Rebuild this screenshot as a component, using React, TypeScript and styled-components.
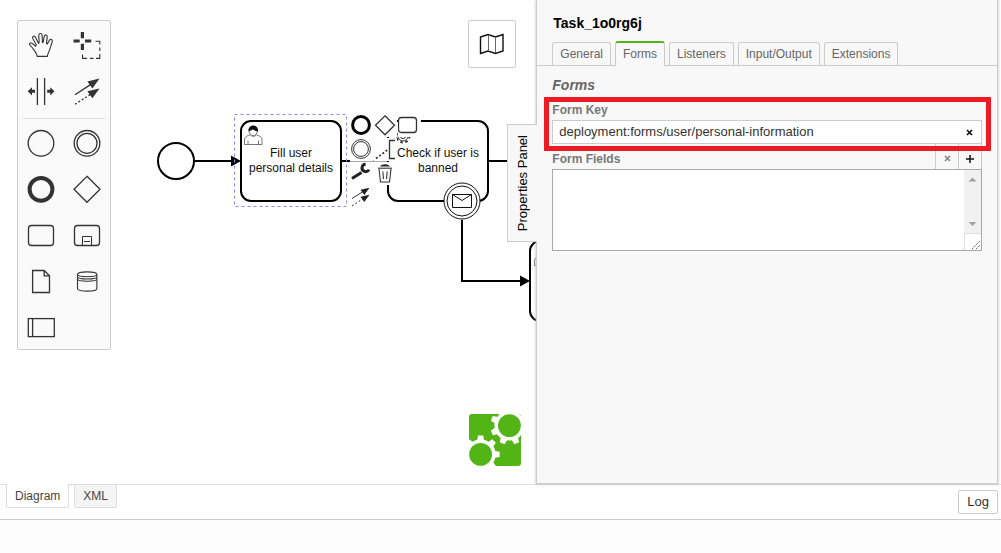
import React from "react";
import styled, { createGlobalStyle, css } from "styled-components";

const GlobalStyle = createGlobalStyle`
  *, *::before, *::after { box-sizing: border-box; }
  body {
    margin: 0;
    background: #fff;
    color: #333;
    font: 12px/16px "Liberation Sans", Arial, Helvetica, sans-serif;
  }
  button, input, textarea { font: inherit; color: inherit; margin: 0; }
`;

const Page = styled.div`
  display: flex;
  flex-direction: column;
  min-height: 100vh;
`;

const Workspace = styled.main`
  display: flex;
  flex: 1;
  padding-right: 3px;
  border-bottom: 1px solid #ddd;
`;

const Canvas = styled.section`
  position: relative;
  flex: 7 1 0;
  min-width: 0;
  overflow: hidden;
`;

const Drawing = styled.svg`
  position: absolute;
  inset: 0;
  width: 100%;
  height: 100%;
  font-size: 12px;
`;

const Palette = styled.nav`
  position: absolute;
  top: 20px;
  left: 17px;
  display: grid;
  grid-template-columns: 46px 46px;
  background: #fafafa;
  border: 1px solid #ccc;
  border-radius: 2px;
`;

const Separator = styled.hr`
  grid-column: 1 / -1;
  width: 82px;
  height: 1px;
  margin: 5px auto 0;
  border: 0;
  background: #ddd;
`;

const ToolButton = styled.button`
  display: block;
  height: 46px;
  padding: 0;
  border: 0;
  background: none;
  svg { display: block; }
`;

const MapButton = styled.button`
  position: absolute;
  top: 20px;
  right: 20px;
  width: 48px;
  height: 48px;
  padding: 0;
  border: 1px solid #ccc;
  border-radius: 2px;
  background: #fff;
  svg { display: block; }
`;

const ContextPad = styled.div`
  position: absolute;
  top: 114px;
  left: 350px;
  display: grid;
  grid-template-columns: repeat(3, 23px);
  grid-auto-rows: 23px;
  gap: 1px;
`;

const PadButton = styled.button<{ $first?: boolean }>`
  padding: 0;
  border: 0;
  background: #fff;
  ${(p) => p.$first && css`grid-column: 1;`}
  svg { display: block; }
`;

const Logo = styled.svg`
  position: absolute;
  right: 15px;
  bottom: 18px;
`;

const Panel = styled.aside`
  position: relative;
  flex: 6 1 0;
  min-width: 0;
  background: #f8f8f8;
  border: 1px solid #ccc;
  border-top: 0;
  box-shadow: 0 0 3px #bbb;
`;

const PanelToggle = styled.button`
  position: absolute;
  top: 124px;
  left: -30px;
  display: flex;
  align-items: center;
  justify-content: center;
  width: 30px;
  height: 118px;
  padding: 0;
  border: 1px solid #ccc;
  border-right: 0;
  background: #f8f8f8;
  color: #000;
  font-size: 13px;
  span { writing-mode: vertical-rl; transform: rotate(180deg); }
`;

const PanelTitle = styled.h1`
  margin: 0;
  padding: 14px 16px 0;
  color: #000;
  font-size: 14px;
  line-height: 18px;
`;

const TabBar = styled.div`
  display: flex;
  align-items: flex-end;
  gap: 4px;
  height: 34px;
  padding: 0 15px;
  border-bottom: 1px solid #ccc;
`;

const PanelTab = styled.button<{ $active?: boolean }>`
  height: 23px;
  padding: 0 7px;
  border: 1px solid #ccc;
  border-bottom: 0;
  border-radius: 3px 3px 0 0;
  background: #f8f8f8;
  color: #666;
  ${(p) =>
    p.$active &&
    css`
      height: 25px;
      margin-bottom: -1px;
      padding-bottom: 1px;
      border-top: 2px solid #52b415;
    `}
`;

const Form = styled.form`
  padding: 10px 15px;
`;

const GroupTitle = styled.h2`
  margin: 0 0 8px;
  color: #666;
  font-size: 14px;
  font-style: italic;
  line-height: 18px;
`;

const Label = styled.label`
  display: block;
  color: #777;
  font-weight: bold;
`;

const KeyField = styled.div`
  position: relative;
  &::before {
    content: "";
    position: absolute;
    inset: -5px -9px -7px -8px;
    z-index: 1;
    border: 5px solid #ed1c24;
    pointer-events: none;
  }
`;

const InputBox = styled.div`
  display: flex;
  height: 24px;
  margin-top: 2px;
  background: #fff;
  border: 1px solid #ccc;
`;

const KeyInput = styled.input`
  flex: 1;
  min-width: 0;
  padding: 0 6px;
  border: 0;
  outline: 0;
  background: none;
  font-size: 13px;
`;

const SymbolButton = styled.button<{ $muted?: boolean }>`
  display: grid;
  place-items: center;
  width: 23px;
  padding: 0;
  border: 0;
  background: none;
  color: ${(p) => (p.$muted ? "#888" : "#111")};
`;

const FieldsHeader = styled.div`
  display: flex;
  align-items: center;
  height: 25px;
  ${Label} { flex: 1; padding-top: 4px; }
  ${SymbolButton} { align-self: stretch; padding-top: 4px; border-left: 1px solid #ccc; }
  ${SymbolButton}:last-child { width: 24px; border-right: 1px solid #ccc; }
`;

const ListBox = styled.div`
  display: flex;
  height: 82px;
  background: #fff;
  border: 1px solid #a9a9a9;
`;

const FieldList = styled.textarea`
  flex: 1;
  min-width: 0;
  padding: 4px;
  border: 0;
  outline: 0;
  resize: none;
  background: none;
`;

const ScrollTrack = styled.div`
  display: flex;
  flex-direction: column;
  width: 17px;
  background: #f1f1f1;
  svg { display: block; }
`;

const Grip = styled.svg`
  margin-top: auto;
  background: #fff;
  border: 1px solid #ddd;
  border-width: 1px 0 0 1px;
`;

const Footer = styled.footer`
  display: flex;
  align-items: flex-start;
  gap: 5px;
  height: 35px;
  padding: 0 3px 0 6px;
  border-bottom: 1px solid #ccc;
`;

const ViewTab = styled.button<{ $active?: boolean }>`
  height: 23px;
  padding: 0 8px;
  border: 1px solid #ddd;
  border-top: 0;
  border-radius: 0 0 2px 2px;
  background: ${(p) => (p.$active ? "#fff" : "#f5f5f5")};
  color: #444;
  ${(p) =>
    p.$active &&
    css`
      position: relative;
      height: 24px;
      margin-top: -1px;
    `}
`;

const LogButton = styled.button`
  height: 24px;
  margin: 5px 0 0 auto;
  padding: 0 8px;
  border: 1px solid #ccc;
  border-radius: 2px;
  background: #fff;
  color: #333;
  font-size: 13px;
`;

const LogStrip = styled.div`
  height: 33px;
  background: #fcfcfc;
`;

const ink = "#333";

type Tool = { label: string; art: React.ReactNode };

const editTools: Tool[] = [
  {
    label: "Hand tool",
    art: (
      <path
        strokeWidth="1.1"
        d="M19.3 35.4C18.6 32 16.2 29.6 14.6 27C13.2 25.2 11 24.4 11.5 22.7C12.4 21.2 14.4 22.4 17.5 25.2L18.3 24L14.7 17.4C13.9 15 16.6 14.2 17.6 16.4L20.6 22.4L21.1 21.7L20.8 14.2C20.9 12 23.9 12 24.1 14.2L24.4 21.5L25.1 21.5L26.3 15.2C26.9 13.2 29.4 13.7 29.2 15.6L28.5 22.6L29.3 23L31.6 19C32.8 17.4 34.8 18.6 34.2 20.6L31.8 28.4C31 31 29.6 32.6 29.3 35.4Z"
      />
    ),
  },
  {
    label: "Lasso tool",
    art: (
      <>
        <path strokeWidth="3.2" d="M9.5 20H15.7M21 20H27.2M18.4 11V17.3M18.4 22.7V29" />
        <path strokeWidth="1.1" d="M31.5 20.2H35.8V23.5M35.8 26.5V30M35.8 33V37.4H32M29.5 37.4H26M23 37.4H18.5V33.5" />
      </>
    ),
  },
  {
    label: "Space tool",
    art: (
      <>
        <path strokeWidth="1.3" d="M19.4 11V38M26.6 11V38" />
        <path fill={ink} stroke="none" d="M9.7 24.3L14 20.2V22.8H17V25.8H14V28.4ZM36.5 24.3L32.2 20.2V22.8H29.2V25.8H32.2V28.4Z" />
      </>
    ),
  },
  {
    label: "Connect tool",
    art: (
      <>
        <path d="M11 27.7L28 16.6" />
        <path strokeDasharray="2 2" d="M11 37.3L28 26.4" />
        <path fill={ink} stroke="none" d="M35.5 11.6L23.4 14.4L28.4 21.4ZM35.5 21.4L23.4 24.2L28.4 31.2Z" />
      </>
    ),
  },
];

const shapeTools: Tool[] = [
  { label: "Start event", art: <circle cx="23" cy="24.3" r="12.8" /> },
  {
    label: "Intermediate event",
    art: (
      <>
        <circle cx="23" cy="24.3" r="12.8" />
        <circle cx="23" cy="24.3" r="10" />
      </>
    ),
  },
  { label: "End event", art: <circle cx="23" cy="24.3" r="11.4" strokeWidth="4" /> },
  { label: "Gateway", art: <path d="M23 11.3L36 24.3L23 37.3L10 24.3Z" /> },
  { label: "Task", art: <rect x="10.5" y="14.5" width="25" height="20" rx="3" /> },
  {
    label: "Sub process",
    art: (
      <>
        <rect x="10.5" y="14.5" width="25" height="20" rx="3" />
        <path strokeWidth="1" d="M18.5 34.5V25.5H27.5V34.5M20 30.5H26" />
      </>
    ),
  },
  {
    label: "Data object",
    art: (
      <>
        <path d="M14.6 13.5H26.2L31.5 18.8V35.5H14.6Z" />
        <path d="M26.2 13.5V18.8H31.5" />
      </>
    ),
  },
  {
    label: "Data store",
    art: (
      <path
        strokeWidth="1.1"
        d="M13.5 17.5C13.5 14 32.9 14 32.9 17.5V31.5C32.9 35 13.5 35 13.5 31.5ZM13.5 17.5C13.5 20.5 32.9 20.5 32.9 17.5M13.5 19.7C13.5 22.7 32.9 22.7 32.9 19.7M13.5 22C13.5 25 32.9 25 32.9 22"
      />
    ),
  },
  {
    label: "Participant",
    art: (
      <>
        <rect x="10.3" y="15.6" width="26" height="18" />
        <path d="M14.6 15.6V33.6" />
      </>
    ),
  },
];

const padItems: (Tool & { first?: boolean })[] = [
  { label: "Append end event", art: <circle cx="11" cy="11" r="8.4" stroke="#000" strokeWidth="3" /> },
  { label: "Append gateway", art: <path d="M11 1.8L20.5 11.3L11 20.8L1.5 11.3Z" /> },
  { label: "Append task", art: <rect x="0.5" y="3.5" width="18" height="15" rx="3" /> },
  {
    label: "Append intermediate event",
    first: true,
    art: (
      <>
        <circle cx="11" cy="11" r="9.4" strokeWidth="1" />
        <circle cx="11" cy="11" r="7.4" strokeWidth="1" />
      </>
    ),
  },
  {
    label: "Append text annotation",
    art: (
      <>
        <path d="M21 2.5H15.5V20.5H21" />
        <path strokeWidth="1.8" strokeDasharray="2 2" d="M2 20.5L14 11.5" />
      </>
    ),
  },
  {
    label: "Change type",
    first: true,
    art: (
      <>
        <path stroke="#222" strokeWidth="3" d="M2 16.5L11.5 10.5" />
        <path stroke="#222" strokeWidth="3" d="M19 7.6A3.7 3.7 0 1 1 15.6 2.2" />
      </>
    ),
  },
  {
    label: "Remove",
    art: (
      <>
        <path strokeWidth="1.1" d="M5 7L6.5 20H15.5L17 7M8.8 9.5L9.5 17M13.2 9.5L12.5 17" />
        <path strokeWidth="1.1" d="M4 6.2H18" />
        <path fill="#222" stroke="none" d="M6 4.6C8 1.6 14 1.6 16 4.6Z" />
      </>
    ),
  },
  {
    label: "Connect",
    first: true,
    art: (
      <>
        <path strokeWidth="1" d="M2 12.5L14 5" />
        <path strokeWidth="1" strokeDasharray="2 2" d="M2 20L14 12" />
        <path fill="#222" stroke="none" d="M19.5 1.8L10.5 3.8L14.3 9ZM19.5 8.8L10.5 10.8L14.3 16Z" />
      </>
    ),
  },
];

function Glyph({ size, children }: { size: number; children: React.ReactNode }) {
  return (
    <svg width={size} height={size} fill="none" stroke={ink} strokeWidth="1.3" aria-hidden="true">
      {children}
    </svg>
  );
}

function Person({ x, y }: { x: number; y: number }) {
  return (
    <g transform={`translate(${x} ${y})`} fill="#fff" stroke="#555" strokeWidth="0.8">
      <path d="M0.5 19.5V14C1 11.5 3.5 10.8 6.2 9.8C7.5 11.8 11 11.8 12.4 9.8C15 10.8 17.5 11.5 18 14V19.5ZM4 19.5V15.5M14.5 19.5V15.5" />
      <path d="M5 5C5 12.5 13.5 12.5 13.5 5C13.5 2 5 2 5 5Z" />
      <path fill="#111" stroke="none" d="M4.6 6.5C3.6 -1.5 15 -1.5 14 6.5C12 5.5 10 5.8 9 4.2C8 5.8 6 5 4.6 6.5Z" />
    </g>
  );
}

function Diagram() {
  return (
    <Drawing role="img" aria-label="Process diagram">
      <g fill="#fff" stroke="#000" strokeWidth="2">
        <circle cx="176" cy="161" r="18" />
        <path fill="none" d="M195 161H232M341 161H350M488 161H540M462 220V281H522" />
        <path fill="none" stroke="#aaa" d="M350 161H388" />
        <rect x="241" y="121" width="100" height="80" rx="10" />
        <rect x="388" y="121" width="100" height="80" rx="10" />
        <rect x="530" y="241" width="100" height="80" rx="10" />
      </g>
      <path d="M241 161L231 155.5V166.5ZM530 281L520 275.5V286.5Z" />
      <Person x={244} y={125} />
      <Person x={534} y={246} />
      <g fill="none" stroke="#333">
        <circle cx="403" cy="136" r="6.5" strokeWidth="2" strokeDasharray="2.5 2.6" />
        <circle cx="403" cy="136" r="5" />
        <circle cx="403" cy="136" r="2.6" />
        <path d="M396.5 117V140" stroke="#aaa" strokeDasharray="2 2" />
      </g>
      <g textAnchor="middle" fill="#111">
        <text x="291" y="157">Fill user</text>
        <text x="291" y="172">personal details</text>
        <text x="438" y="157">Check if user is</text>
        <text x="438" y="172">banned</text>
      </g>
      <rect x="234.5" y="114.5" width="112" height="92" fill="none" stroke="#8888ff" strokeDasharray="3 3" />
      <g fill="#fff" stroke="#111" strokeWidth="1">
        <circle cx="462" cy="201" r="18" />
        <circle cx="462" cy="201" r="15" />
        <path d="M452.5 194.5H471.5V207.5H452.5ZM452.5 194.5L462 200.5L471.5 194.5" />
      </g>
    </Drawing>
  );
}

function Gear({ cx, cy, start }: { cx: number; cy: number; start: number }) {
  return (
    <g transform={`translate(${cx} ${cy})`}>
      <circle r="15" fill="#fff" />
      {[0, 1, 2, 3, 4, 5, 6, 7].map((n) => (
        <path key={n} fill="#fff" d="M13 -3.6L19 -2.6V2.6L13 3.6Z" transform={`rotate(${start + n * 45})`} />
      ))}
      <circle r="11.4" fill="#52b415" />
    </g>
  );
}

function Cross() {
  return (
    <svg width="7" height="7" stroke="currentColor" strokeWidth="1.7" aria-hidden="true">
      <path d="M1 1L6 6M6 1L1 6" />
    </svg>
  );
}

const panelTabs = ["General", "Forms", "Listeners", "Input/Output", "Extensions"];

export default function App() {
  return (
    <>
      <GlobalStyle />
      <Page>
        <Workspace>
          <Canvas>
            <Diagram />
            <ContextPad>
              {padItems.map((item) => (
                <PadButton key={item.label} $first={item.first} aria-label={item.label}>
                  <Glyph size={23}>{item.art}</Glyph>
                </PadButton>
              ))}
            </ContextPad>
            <Palette aria-label="Tools">
              {editTools.map((tool) => (
                <ToolButton key={tool.label} aria-label={tool.label}>
                  <Glyph size={46}>{tool.art}</Glyph>
                </ToolButton>
              ))}
              <Separator />
              {shapeTools.map((tool) => (
                <ToolButton key={tool.label} aria-label={tool.label}>
                  <Glyph size={46}>{tool.art}</Glyph>
                </ToolButton>
              ))}
            </Palette>
            <MapButton aria-label="Toggle minimap">
              <Glyph size={46}>
                <path stroke="#111" strokeWidth="1.4" d="M11.5 16L19 13.5L26.5 16L34 13.5V30L26.5 32.5L19 30L11.5 32.5Z" />
                <path stroke="#666" strokeWidth="1" d="M19.5 14V30M26.5 16V32" />
              </Glyph>
            </MapButton>
            <Logo width="52" height="52" aria-label="Modeler" role="img">
              <rect width="52" height="52" rx="3" fill="#52b415" />
              <Gear cx={40.4} cy={11.6} start={22.5} />
              <Gear cx={11.6} cy={40.4} start={0} />
            </Logo>
          </Canvas>

          <Panel>
            <PanelToggle>
              <span>Properties Panel</span>
            </PanelToggle>
            <PanelTitle>Task_1o0rg6j</PanelTitle>
            <TabBar role="tablist">
              {panelTabs.map((name) => (
                <PanelTab key={name} role="tab" aria-selected={name === "Forms"} $active={name === "Forms"}>
                  {name}
                </PanelTab>
              ))}
            </TabBar>
            <Form onSubmit={(e) => e.preventDefault()}>
              <GroupTitle>Forms</GroupTitle>
              <KeyField>
                <Label htmlFor="form-key">Form Key</Label>
                <InputBox>
                  <KeyInput id="form-key" defaultValue="deployment:forms/user/personal-information" />
                  <SymbolButton type="button" aria-label="Clear form key">
                    <Cross />
                  </SymbolButton>
                </InputBox>
              </KeyField>
              <FieldsHeader>
                <Label htmlFor="form-fields">Form Fields</Label>
                <SymbolButton type="button" $muted aria-label="Remove field">
                  <Cross />
                </SymbolButton>
                <SymbolButton type="button" aria-label="Add field">
                  <svg width="8" height="8" stroke="currentColor" strokeWidth="1.5" aria-hidden="true">
                    <path d="M4 0V8M0 4H8" />
                  </svg>
                </SymbolButton>
              </FieldsHeader>
              <ListBox>
                <FieldList id="form-fields" />
                <ScrollTrack aria-hidden="true">
                  <svg width="17" height="63" fill="#a3a3a3">
                    <path d="M4.5 11.5L8.5 7.5L12.5 11.5ZM4.5 52L8.5 56L12.5 52Z" />
                  </svg>
                  <Grip width="17" height="17" stroke="#666">
                    <path d="M7 15L15 7M11 15L15 11" strokeDasharray="2 1" />
                  </Grip>
                </ScrollTrack>
              </ListBox>
            </Form>
          </Panel>
        </Workspace>
        <Footer>
          <ViewTab $active>Diagram</ViewTab>
          <ViewTab>XML</ViewTab>
          <LogButton>Log</LogButton>
        </Footer>
        <LogStrip />
      </Page>
    </>
  );
}
